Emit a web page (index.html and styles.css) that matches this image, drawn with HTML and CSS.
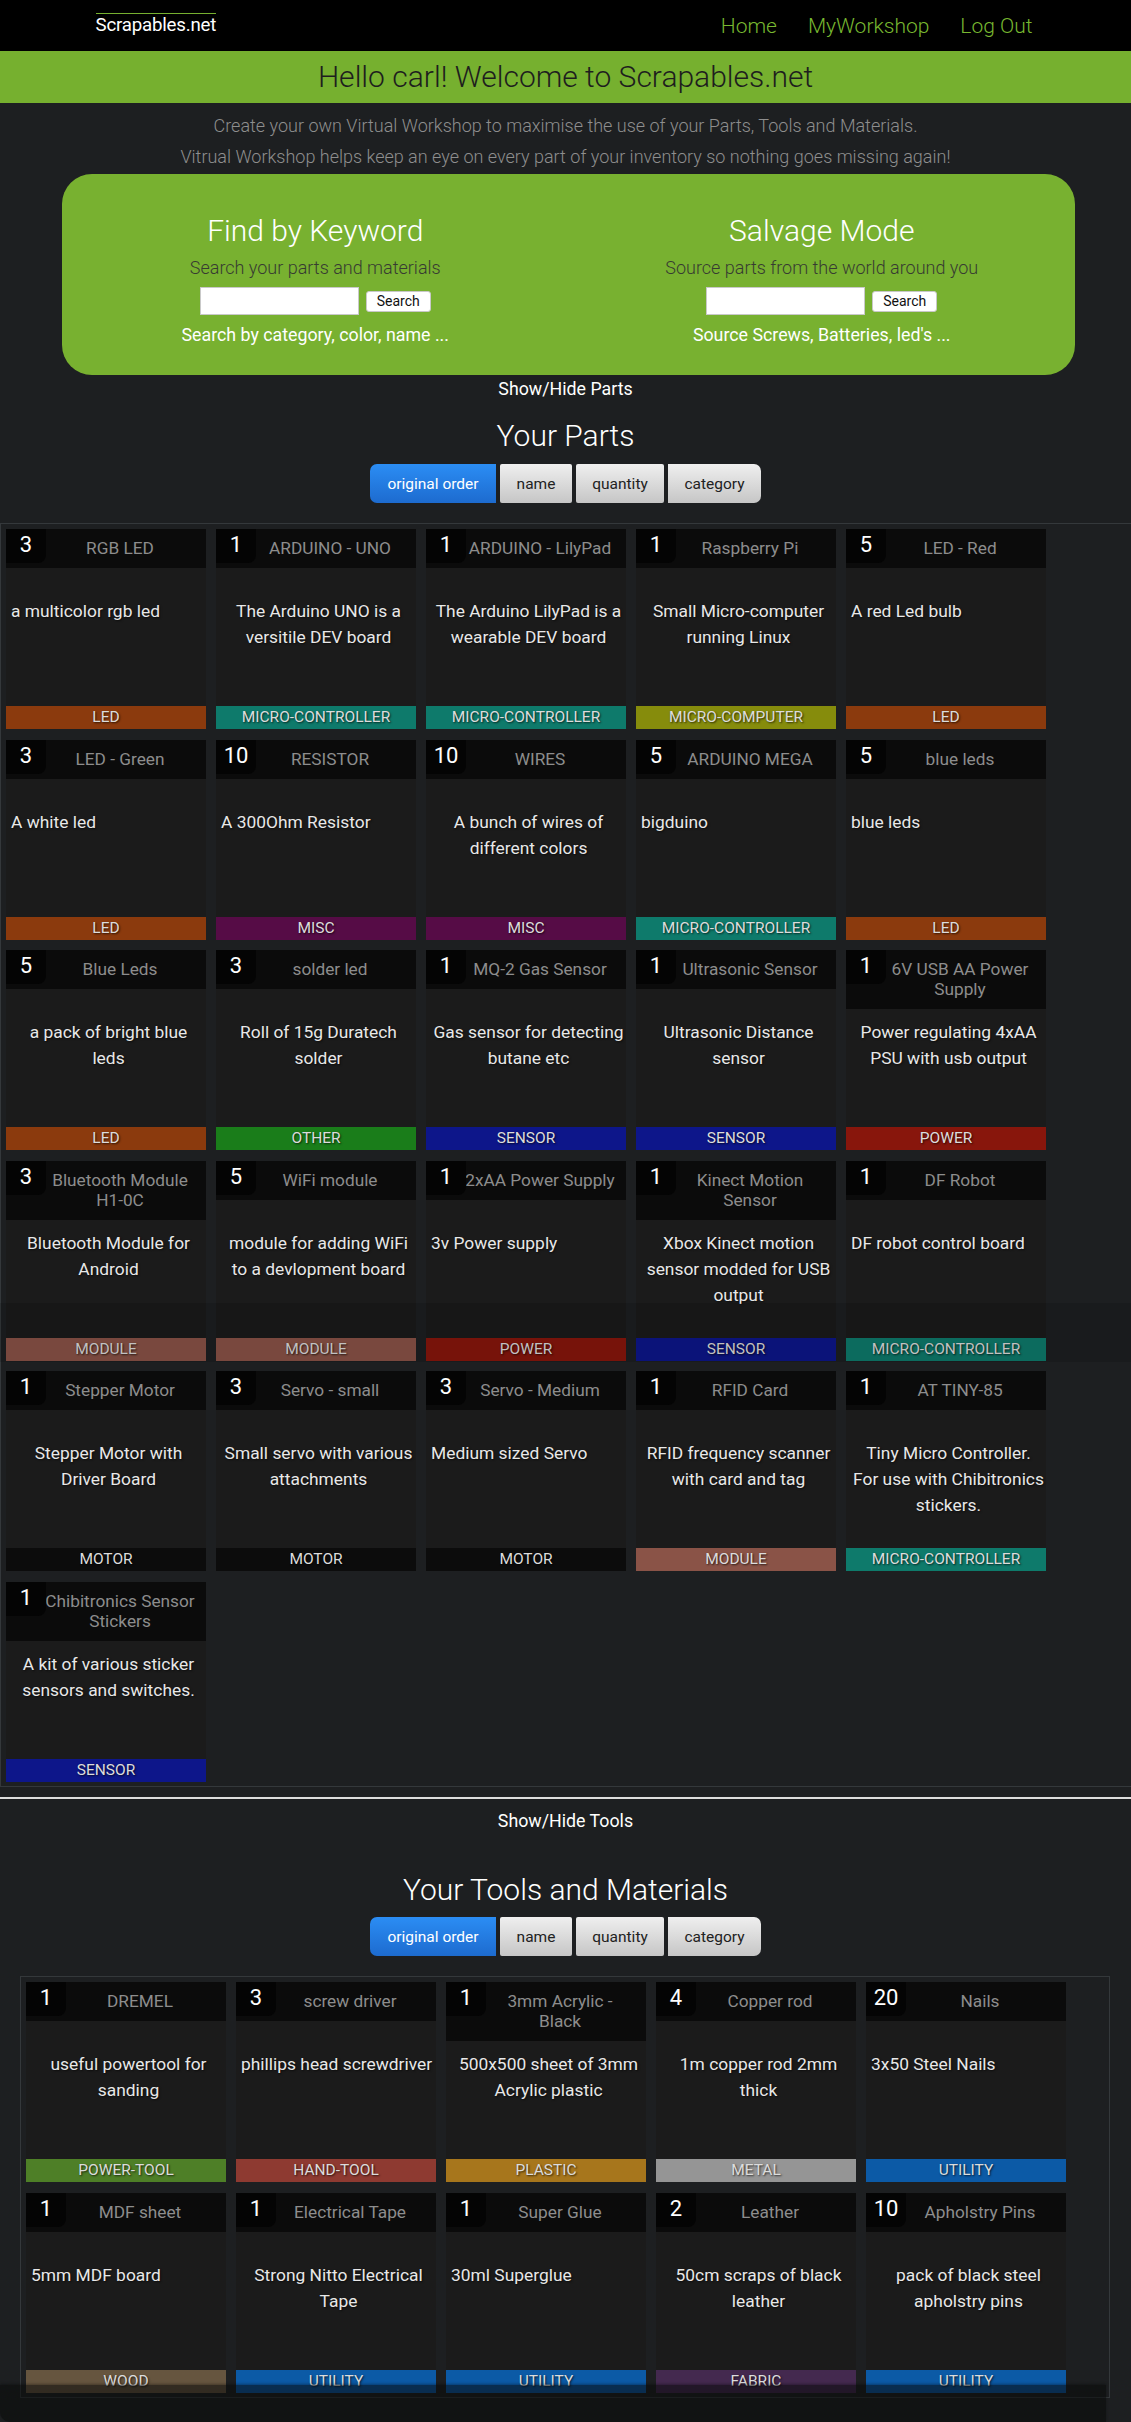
FILE: index.html
```html
<!DOCTYPE html>
<html lang="en">
<head>
<meta charset="utf-8">
<title>Scrapables.net - MyWorkshop</title>
<link rel="stylesheet" href="styles.css">
</head>
<body>
<nav class="topbar">
  <div class="topbar-inner">
    <a class="brand" href="#">Scrapables.net</a>
    <ul class="nav-links">
      <li><a href="#">Home</a></li>
      <li><a href="#">MyWorkshop</a></li>
      <li><a href="#">Log Out</a></li>
    </ul>
  </div>
</nav>

<header class="welcome">
  <h1>Hello carl! Welcome to Scrapables.net</h1>
</header>

<section class="intro">
  <p>Create your own Virtual Workshop to maximise the use of your Parts, Tools and Materials.</p>
  <p>Vitrual Workshop helps keep an eye on every part of your inventory so nothing goes missing again!</p>
</section>

<section class="finder">
  <div class="finder-col">
    <h3>Find by Keyword</h3>
    <p class="finder-sub">Search your parts and materials</p>
    <form class="search-row"><input type="text" class="search-input"><button type="button" class="search-btn">Search</button></form>
    <p class="finder-hint">Search by category, color, name ...</p>
  </div>
  <div class="finder-col">
    <h3>Salvage Mode</h3>
    <p class="finder-sub">Source parts from the world around you</p>
    <form class="search-row"><input type="text" class="search-input"><button type="button" class="search-btn">Search</button></form>
    <p class="finder-hint">Source Screws, Batteries, led's ...</p>
  </div>
</section>

<div class="toggle">Show/Hide Parts</div>
<h2 class="section-title">Your Parts</h2>
<div class="sort-group">
  <button class="sort-btn active">original order</button>
  <button class="sort-btn">name</button>
  <button class="sort-btn">quantity</button>
  <button class="sort-btn">category</button>
</div>

<div class="parts-panel">
  <div class="card-grid">
    <article class="card"><div class="card-top"><div class="card-head"><span class="qty">3</span><span class="name">RGB LED</span></div></div><div class="card-body"><p class="desc">a multicolor rgb led</p></div><div class="tag tag-led">LED</div></article>
    <article class="card"><div class="card-top"><div class="card-head"><span class="qty">1</span><span class="name">ARDUINO - UNO</span></div></div><div class="card-body"><p class="desc">The Arduino UNO is a versitile DEV board</p></div><div class="tag tag-mcu">MICRO-CONTROLLER</div></article>
    <article class="card"><div class="card-top"><div class="card-head"><span class="qty">1</span><span class="name">ARDUINO - LilyPad</span></div></div><div class="card-body"><p class="desc">The Arduino LilyPad is a wearable DEV board</p></div><div class="tag tag-mcu">MICRO-CONTROLLER</div></article>
    <article class="card"><div class="card-top"><div class="card-head"><span class="qty">1</span><span class="name">Raspberry Pi</span></div></div><div class="card-body"><p class="desc">Small Micro-computer running Linux</p></div><div class="tag tag-mcomp">MICRO-COMPUTER</div></article>
    <article class="card"><div class="card-top"><div class="card-head"><span class="qty">5</span><span class="name">LED - Red</span></div></div><div class="card-body"><p class="desc">A red Led bulb</p></div><div class="tag tag-led">LED</div></article>

    <article class="card"><div class="card-top"><div class="card-head"><span class="qty">3</span><span class="name">LED - Green</span></div></div><div class="card-body"><p class="desc">A white led</p></div><div class="tag tag-led">LED</div></article>
    <article class="card"><div class="card-top"><div class="card-head"><span class="qty">10</span><span class="name">RESISTOR</span></div></div><div class="card-body"><p class="desc">A 300Ohm Resistor</p></div><div class="tag tag-misc">MISC</div></article>
    <article class="card"><div class="card-top"><div class="card-head"><span class="qty">10</span><span class="name">WIRES</span></div></div><div class="card-body"><p class="desc">A bunch of wires of different colors</p></div><div class="tag tag-misc">MISC</div></article>
    <article class="card"><div class="card-top"><div class="card-head"><span class="qty">5</span><span class="name">ARDUINO MEGA</span></div></div><div class="card-body"><p class="desc">bigduino</p></div><div class="tag tag-mcu">MICRO-CONTROLLER</div></article>
    <article class="card"><div class="card-top"><div class="card-head"><span class="qty">5</span><span class="name">blue leds</span></div></div><div class="card-body"><p class="desc">blue leds</p></div><div class="tag tag-led">LED</div></article>

    <article class="card"><div class="card-top"><div class="card-head"><span class="qty">5</span><span class="name">Blue Leds</span></div></div><div class="card-body"><p class="desc desc-block">a pack of bright blue<br>leds</p></div><div class="tag tag-led">LED</div></article>
    <article class="card"><div class="card-top"><div class="card-head"><span class="qty">3</span><span class="name">solder led</span></div></div><div class="card-body"><p class="desc">Roll of 15g Duratech solder</p></div><div class="tag tag-other">OTHER</div></article>
    <article class="card"><div class="card-top"><div class="card-head"><span class="qty">1</span><span class="name">MQ-2 Gas Sensor</span></div></div><div class="card-body"><p class="desc">Gas sensor for detecting butane etc</p></div><div class="tag tag-sensor">SENSOR</div></article>
    <article class="card"><div class="card-top"><div class="card-head"><span class="qty">1</span><span class="name">Ultrasonic Sensor</span></div></div><div class="card-body"><p class="desc">Ultrasonic Distance sensor</p></div><div class="tag tag-sensor">SENSOR</div></article>
    <article class="card"><div class="card-top"><div class="card-head"><span class="qty">1</span><span class="name">6V USB AA Power Supply</span></div></div><div class="card-body"><p class="desc">Power regulating 4xAA PSU with usb output</p></div><div class="tag tag-power">POWER</div></article>

    <article class="card"><div class="card-top"><div class="card-head"><span class="qty">3</span><span class="name">Bluetooth Module <span class="nobr">H1-0C</span></span></div></div><div class="card-body"><p class="desc">Bluetooth Module for Android</p></div><div class="tag tag-module">MODULE</div></article>
    <article class="card"><div class="card-top"><div class="card-head"><span class="qty">5</span><span class="name">WiFi module</span></div></div><div class="card-body"><p class="desc">module for adding WiFi to a devlopment board</p></div><div class="tag tag-module">MODULE</div></article>
    <article class="card"><div class="card-top"><div class="card-head"><span class="qty">1</span><span class="name">2xAA Power Supply</span></div></div><div class="card-body"><p class="desc">3v Power supply</p></div><div class="tag tag-power">POWER</div></article>
    <article class="card"><div class="card-top"><div class="card-head"><span class="qty">1</span><span class="name">Kinect Motion Sensor</span></div></div><div class="card-body"><p class="desc">Xbox Kinect motion sensor modded for USB output</p></div><div class="tag tag-sensor">SENSOR</div></article>
    <article class="card"><div class="card-top"><div class="card-head"><span class="qty">1</span><span class="name">DF Robot</span></div></div><div class="card-body"><p class="desc">DF robot control board</p></div><div class="tag tag-mcu">MICRO-CONTROLLER</div></article>

    <article class="card"><div class="card-top"><div class="card-head"><span class="qty">1</span><span class="name">Stepper Motor</span></div></div><div class="card-body"><p class="desc">Stepper Motor with Driver Board</p></div><div class="tag tag-motor">MOTOR</div></article>
    <article class="card"><div class="card-top"><div class="card-head"><span class="qty">3</span><span class="name">Servo - small</span></div></div><div class="card-body"><p class="desc">Small servo with various attachments</p></div><div class="tag tag-motor">MOTOR</div></article>
    <article class="card"><div class="card-top"><div class="card-head"><span class="qty">3</span><span class="name">Servo - Medium</span></div></div><div class="card-body"><p class="desc">Medium sized Servo</p></div><div class="tag tag-motor">MOTOR</div></article>
    <article class="card"><div class="card-top"><div class="card-head"><span class="qty">1</span><span class="name">RFID Card</span></div></div><div class="card-body"><p class="desc">RFID frequency scanner with card and tag</p></div><div class="tag tag-module">MODULE</div></article>
    <article class="card"><div class="card-top"><div class="card-head"><span class="qty">1</span><span class="name">AT TINY-85</span></div></div><div class="card-body"><p class="desc desc-block">Tiny Micro Controller.<br>For use with Chibitronics stickers.</p></div><div class="tag tag-mcu">MICRO-CONTROLLER</div></article>

    <article class="card"><div class="card-top"><div class="card-head"><span class="qty">1</span><span class="name">Chibitronics Sensor Stickers</span></div></div><div class="card-body"><p class="desc">A kit of various sticker sensors and switches.</p></div><div class="tag tag-sensor">SENSOR</div></article>
  </div>
</div>

<hr class="divider">

<div class="toggle">Show/Hide Tools</div>
<h2 class="section-title section-title-tools">Your Tools and Materials</h2>
<div class="sort-group sort-group-tools">
  <button class="sort-btn active">original order</button>
  <button class="sort-btn">name</button>
  <button class="sort-btn">quantity</button>
  <button class="sort-btn">category</button>
</div>

<div class="tools-panel">
  <div class="card-grid">
    <article class="card"><div class="card-top"><div class="card-head"><span class="qty">1</span><span class="name">DREMEL</span></div></div><div class="card-body"><p class="desc">useful powertool for sanding</p></div><div class="tag tag-powertool">POWER-TOOL</div></article>
    <article class="card"><div class="card-top"><div class="card-head"><span class="qty">3</span><span class="name">screw driver</span></div></div><div class="card-body"><p class="desc">phillips head screwdriver</p></div><div class="tag tag-handtool">HAND-TOOL</div></article>
    <article class="card"><div class="card-top"><div class="card-head"><span class="qty">1</span><span class="name">3mm Acrylic -<br>Black</span></div></div><div class="card-body"><p class="desc">500x500 sheet of 3mm Acrylic plastic</p></div><div class="tag tag-plastic">PLASTIC</div></article>
    <article class="card"><div class="card-top"><div class="card-head"><span class="qty">4</span><span class="name">Copper rod</span></div></div><div class="card-body"><p class="desc">1m copper rod 2mm thick</p></div><div class="tag tag-metal">METAL</div></article>
    <article class="card"><div class="card-top"><div class="card-head"><span class="qty">20</span><span class="name">Nails</span></div></div><div class="card-body"><p class="desc">3x50 Steel Nails</p></div><div class="tag tag-utility">UTILITY</div></article>

    <article class="card"><div class="card-top"><div class="card-head"><span class="qty">1</span><span class="name">MDF sheet</span></div></div><div class="card-body"><p class="desc">5mm MDF board</p></div><div class="tag tag-wood">WOOD</div></article>
    <article class="card"><div class="card-top"><div class="card-head"><span class="qty">1</span><span class="name">Electrical Tape</span></div></div><div class="card-body"><p class="desc">Strong Nitto Electrical Tape</p></div><div class="tag tag-utility">UTILITY</div></article>
    <article class="card"><div class="card-top"><div class="card-head"><span class="qty">1</span><span class="name">Super Glue</span></div></div><div class="card-body"><p class="desc">30ml Superglue</p></div><div class="tag tag-utility">UTILITY</div></article>
    <article class="card"><div class="card-top"><div class="card-head"><span class="qty">2</span><span class="name">Leather</span></div></div><div class="card-body"><p class="desc">50cm scraps of black leather</p></div><div class="tag tag-fabric">FABRIC</div></article>
    <article class="card"><div class="card-top"><div class="card-head"><span class="qty">10</span><span class="name">Apholstry Pins</span></div></div><div class="card-body"><p class="desc">pack of black steel apholstry pins</p></div><div class="tag tag-utility">UTILITY</div></article>
  </div>
</div>

<div class="shade shade-mid"></div>
<div class="shade shade-bottom"></div>
</body>
</html>
```

FILE: styles.css
```css
html {
  background: #1d1f21;
}

body {
  margin: 0;
  position: relative;
  min-height: 2422px;
  background: #1d1f21;
  font-family: Roboto, "Noto Sans", "Liberation Sans", sans-serif;
  color: #e6e6e6;
}

/* ---------- top bar ---------- */
.topbar {
  background: #000;
  height: 51px;
}

.topbar-inner {
  width: 940px;
  margin: 0 auto;
  height: 51px;
  display: flex;
  align-items: center;
  justify-content: space-between;
}

.brand {
  color: #fff;
  text-decoration: none;
  font-size: 18.7px;
  line-height: 20px;
  letter-spacing: -0.2px;
  border-top: 1px solid #76b02f;
  padding-top: 1px;
  margin-left: 0;
  margin-top: -3px;
}

.nav-links {
  list-style: none;
  margin: 0;
  padding: 0 3px 0 0;
  display: flex;
  gap: 31px;
}

.nav-links a {
  color: #78b830;
  text-decoration: none;
  font-size: 21px;
  font-weight: 300;
  line-height: 24px;
}

/* ---------- welcome banner ---------- */
.welcome {
  background: #76b02f;
  height: 52px;
  display: flex;
  align-items: center;
  justify-content: center;
}

.welcome h1 {
  margin: 0;
  font-size: 30px;
  font-weight: 300;
  color: #1e1e1e;
  line-height: 52px;
}

/* ---------- intro ---------- */
.intro {
  padding-top: 12px;
  text-align: center;
}

.intro p {
  margin: 0 0 9px;
  font-size: 18px;
  font-weight: 300;
  line-height: 22px;
  color: #8e8e8e;
}

/* ---------- finder box ---------- */
.finder {
  margin: -3px 56px 0 62px;
  background: #78b130;
  border-radius: 30px;
  display: grid;
  grid-template-columns: 1fr 1fr;
  padding: 39px 0 30px;
  text-align: center;
}

.finder-col h3 {
  margin: 0;
  font-size: 30px;
  font-weight: 300;
  line-height: 36px;
  color: #fff;
}

.finder-sub {
  margin: 9px 0 0;
  font-size: 18px;
  font-weight: 300;
  line-height: 20px;
  color: #373b32;
}

.search-row {
  margin: 9px 0 0;
  height: 28px;
  display: flex;
  align-items: center;
  justify-content: center;
  gap: 7px;
}

.search-input {
  box-sizing: border-box;
  width: 159px;
  height: 28px;
  margin: 0;
  border: 1px solid #c9c9c9;
  background: #fff;
}

.search-btn {
  box-sizing: border-box;
  height: 21px;
  width: 65px;
  padding: 0;
  border: 1px solid #c8c8c8;
  border-radius: 3px;
  background: #fff;
  color: #111;
  font-family: Roboto, "Liberation Sans", sans-serif;
  font-size: 14px;
}

.finder-hint {
  margin: 10px 0 0;
  font-size: 17.8px;
  line-height: 20px;
  color: #fff;
}

/* ---------- section headings ---------- */
.toggle {
  margin-top: 4px;
  text-align: center;
  font-size: 17.8px;
  line-height: 20px;
  color: #fff;
}

.section-title {
  margin: 19px 0 0;
  text-align: center;
  font-size: 30px;
  font-weight: 300;
  line-height: 36px;
  color: #fff;
}

.section-title-tools {
  margin-top: 41px;
}

.sort-group {
  margin-top: 10px;
  display: flex;
  justify-content: center;
  gap: 4px;
}

.sort-group-tools {
  margin-top: 9px;
}

.sort-btn {
  height: 39px;
  border: none;
  padding: 0;
  font-family: Roboto, "Liberation Sans", sans-serif;
  font-size: 15.5px;
  color: #222;
  background: linear-gradient(#efefef, #c6c6c6);
  border-radius: 2px;
}

.sort-btn.active {
  color: #fff;
  background: linear-gradient(#2b8df4, #1d6bcf);
  width: 126px;
  border-radius: 7px 0 0 7px;
}

.sort-btn:nth-child(2) { width: 72px; }
.sort-btn:nth-child(3) { width: 88px; }
.sort-btn:nth-child(4) { width: 93px; border-radius: 0 7px 7px 0; }

/* ---------- panels ---------- */
.parts-panel {
  margin-top: 20px;
  border: 1px solid #34383b;
  border-right: none;
  padding: 5px 5px 4.5px;
}

.divider {
  margin: 10px 0 0;
  height: 2px;
  border: none;
  background: #dcdcdc;
}

.divider + .toggle {
  margin-top: 12px;
}

.tools-panel {
  margin: 20px 21px 0 20px;
  border: 1px solid #34383b;
  padding: 5px 5px 4.5px;
}

.card-grid {
  display: grid;
  grid-template-columns: repeat(5, 200px);
  column-gap: 10px;
  row-gap: 10.5px;
}

/* ---------- cards ---------- */
.card {
  height: 200px;
  display: flex;
  flex-direction: column;
  background: #1b1b1b;
}

.card-top {
  height: 59px;
}

.card-head {
  position: relative;
  background: #0b0b0b;
  padding: 9px 7px 10px 35px;
  line-height: 20px;
  font-size: 17.25px;
  text-align: center;
  color: #8d8d8d;
}

.nobr {
  white-space: nowrap;
}

.qty {
  position: absolute;
  left: 0;
  top: 0;
  width: 40px;
  height: 34px;
  background: #040404;
  border-bottom-right-radius: 8px;
  color: #fff;
  font-size: 22px;
  line-height: 32px;
  text-align: center;
}

.card-body {
  flex: 1;
  padding: 10px 0 0 5px;
}

.desc {
  display: inline-block;
  margin: 0;
  text-align: center;
  font-size: 17.4px;
  line-height: 26px;
  color: #e8e8e8;
  text-shadow: 1px 1px 2px rgba(0, 0, 0, 0.6);
}

.desc-block {
  display: block;
}

.tag {
  height: 23px;
  line-height: 23px;
  text-align: center;
  font-size: 15.5px;
  color: #dcdcdc;
  text-shadow: 1px 1px 2px rgba(0, 0, 0, 0.7);
}

.tag-led { background: #8b3a0d; }
.tag-mcu { background: #0e7a6b; }
.tag-mcomp { background: #868c0c; }
.tag-misc { background: #560c46; }
.tag-other { background: #1a7d1a; }
.tag-sensor { background: #0d168a; }
.tag-power { background: #88160c; }
.tag-module { background: #8a5347; }
.tag-motor { background: #0c0c0c; }
.tag-powertool { background: #4e7f27; }
.tag-handtool { background: #8e3a31; }
.tag-plastic { background: #a7761c; }
.tag-metal { background: #959595; }
.tag-utility { background: #0c5aa6; }
.tag-wood { background: #66553f; }
.tag-fabric { background: #44294f; }

/* ---------- overlay shading (screen capture artefacts) ---------- */
.shade {
  position: absolute;
  left: 0;
  pointer-events: none;
}

.shade-mid {
  top: 1303px;
  width: 100%;
  height: 59px;
  background: rgba(0, 0, 0, 0.12);
}

.shade-bottom {
  top: 2385px;
  width: 1106px;
  height: 37px;
  background: rgba(8, 9, 10, 0.55);
  border-bottom-left-radius: 10px;
  box-shadow: 0 -1px 3px rgba(0, 0, 0, 0.35);
}
```
